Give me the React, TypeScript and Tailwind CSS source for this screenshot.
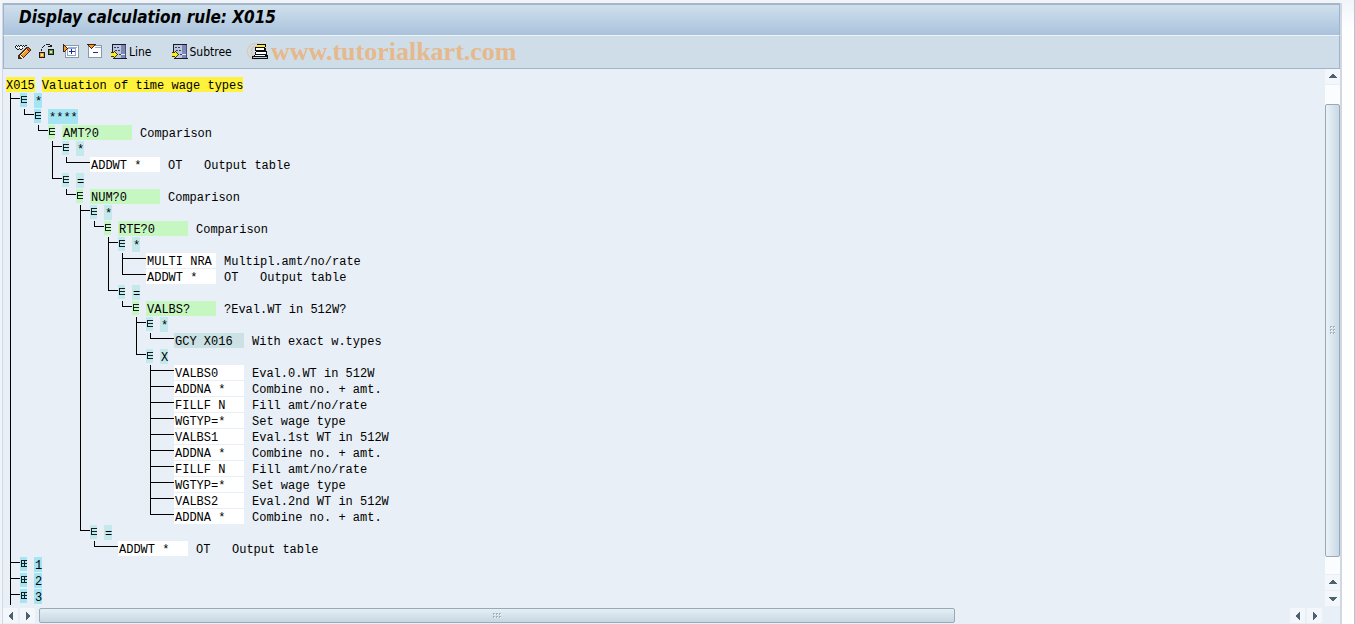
import { useState, type ReactNode } from "react";

type Tone = "cyan" | "teal" | "green" | "white" | "gray";

interface TreeNode {
  label: string;
  tone: Tone;
  text?: string;
  wide?: boolean;
  leaf?: boolean;
  children?: TreeNode[];
}

const TONES: Record<Tone, string> = {
  cyan: "bg-[#a5e4f2]",
  teal: "bg-[#c4e9ec]",
  green: "bg-[#c6f7c1]",
  white: "bg-white",
  gray: "bg-[#cbe1e3]",
};

const op = (label: string, text: string, tone: Tone = "white"): TreeNode => ({
  label,
  text,
  tone,
  wide: true,
  leaf: true,
});

const decision = (label: string, text: string, children: TreeNode[]): TreeNode => ({
  label,
  text,
  tone: "green",
  wide: true,
  children,
});

const branch = (label: string, children: TreeNode[]): TreeNode => ({ label, tone: "teal", children });

const TREE: TreeNode[] = [
  {
    label: "*",
    tone: "cyan",
    children: [
      {
        label: "****",
        tone: "cyan",
        children: [
          decision("AMT?0", "Comparison", [
            branch("*", [op("ADDWT *", "OT   Output table")]),
            branch("=", [
              decision("NUM?0", "Comparison", [
                branch("*", [
                  decision("RTE?0", "Comparison", [
                    branch("*", [
                      op("MULTI NRA", "Multipl.amt/no/rate"),
                      op("ADDWT *", "OT   Output table"),
                    ]),
                    branch("=", [
                      decision("VALBS?", "?Eval.WT in 512W?", [
                        branch("*", [op("GCY X016", "With exact w.types", "gray")]),
                        branch("X", [
                          op("VALBS0", "Eval.0.WT in 512W"),
                          op("ADDNA *", "Combine no. + amt."),
                          op("FILLF N", "Fill amt/no/rate"),
                          op("WGTYP=*", "Set wage type"),
                          op("VALBS1", "Eval.1st WT in 512W"),
                          op("ADDNA *", "Combine no. + amt."),
                          op("FILLF N", "Fill amt/no/rate"),
                          op("WGTYP=*", "Set wage type"),
                          op("VALBS2", "Eval.2nd WT in 512W"),
                          op("ADDNA *", "Combine no. + amt."),
                        ]),
                      ]),
                    ]),
                  ]),
                ]),
                branch("=", [op("ADDWT *", "OT   Output table")]),
              ]),
            ]),
          ]),
        ],
      },
    ],
  },
  { label: "1", tone: "cyan" },
  { label: "2", tone: "cyan" },
  { label: "3", tone: "cyan" },
];

interface Row {
  id: string;
  node: TreeNode;
  guides: boolean[];
  continues: boolean;
}

function flatten(nodes: TreeNode[], closed: string[], guides: boolean[] = [], prefix = "n"): Row[] {
  return nodes.flatMap((node, i) => {
    const id = `${prefix}-${i}`;
    const last = i === nodes.length - 1;
    const continues = !last || guides.length === 0;
    const row: Row = { id, node, guides, continues };
    const kids =
      node.children && !closed.includes(id)
        ? flatten(node.children, closed, [...guides, continues], id)
        : [];
    return [row, ...kids];
  });
}

function Icon({ children }: { children: ReactNode }) {
  return (
    <svg className="h-4 w-4 shrink-0" viewBox="0 0 16 16" shapeRendering="crispEdges" aria-hidden="true">
      {children}
    </svg>
  );
}

function GlassesPencilIcon() {
  return (
    <Icon>
      <path
        d="M0 2h1v2h-1zM1 1h1v1h-1zM1 4h1v1h-1zM2 2h1v1h-1zM3 1h1v1h-1zM2 5h2v1h-2zM4 2h1v1h-1zM5 1h2v1h-2zM5 5h2v1h-2zM4 4h1v1h-1zM7 2h1v1h-1zM8 1h1v1h-1zM7 4h1v1h-1zM9 2h1v1h-1zM10 1h2v1h-2z"
        fill="#1b1b1b"
      />
      <path d="M1 2h1v2h-1zM3 3h1v2h-1zM5 2h2v3h-2zM8 2h1v1h-1z" fill="#ffffff" />
      <path d="M12 3h2v1h1v1h1v2h-1v1h-1v1h-1v1h-1v1h-1v1h-1v1h-1v1h-2v1h-4v-4h1v-1h1v-1h1v-1h1v-1h1v-1h1v-1h1v-1h1v-1h1z" fill="#4a2a12" />
      <path d="M11 5h1v1h1v1h1v1h-1v1h-1v1h-1v1h-1v1h-1v1h-1v-1h-1v-1h-1v-1h1v-1h1v-1h1v-1h1v-1h1z" fill="#f59a28" />
      <path d="M11 5h1v1h-1v1h-1v1h-1v1h-1v1h-1v1h-1v-1h1v-1h1v-1h1v-1h1v-1h1z" fill="#ffe9a8" />
      <path d="M12 4h2v1h1v2h-1v-1h-1v-1h-1z" fill="#d9502a" />
      <path d="M5 11h1v1h1v1h1v1h-2v-1h-1z" fill="#fff2d5" />
    </Icon>
  );
}

function SwitchObjectIcon() {
  return (
    <Icon>
      <path d="M3 3h1v-1h1v1h-1v1h-1zM5 1h1v1h-1zM7 0h4v1h-4zM11 1h1v2h-1zM9 2h2v1h-2zM12 1h1v2h-1zM2 5h1v2h-1z" fill="#1b1b1b" />
      <path d="M0 8h6v6h-6zM9 5h6v6h-6z" fill="#1b1b1b" />
      <path d="M1 9h4v4h-4z" fill="#f59a1e" />
      <path d="M2 10h2v2h-2z" fill="#ffe9a8" />
      <path d="M10 6h4v4h-4z" fill="#5f9a3a" />
      <path d="M11 7h2v2h-2z" fill="#d3efb4" />
    </Icon>
  );
}

function ExpandIcon() {
  return (
    <Icon>
      <path d="M2 1h14v13h-14z" fill="#8d98a8" />
      <path d="M3 2h12v11h-12z" fill="#ffffff" />
      <path d="M5 3h9v1h-9z" fill="#8faed6" />
      <path d="M4 4h9v8h-9z" fill="#8ea6cf" />
      <path d="M5 5h7v6h-7z" fill="#ffffff" />
      <path d="M6 7h6v1h-6zM8 5h1v5h-1z" fill="#1d2c9c" />
      <path d="M0 0h1v1h1v1h1v1h1v1h1v1h-1v1h-1v1h-1v1h-2z" fill="#3a2108" />
      <path d="M1 1v1h1v1h1v1h1v1h-1v1h-1v1h-1z" fill="#ff9a1a" />
    </Icon>
  );
}

function CollapseIcon() {
  return (
    <Icon>
      <path d="M1 1h14v13h-14z" fill="#8d98a8" />
      <path d="M2 2h12v11h-12z" fill="#ffffff" />
      <path d="M8 3h6v1h-6z" fill="#8faed6" />
      <path d="M6 8h5v1h-5z" fill="#1d2c9c" />
      <path d="M0 0h9v1h-1v1h-1v1h-1v1h-1v1h-1v-1h-1v-1h-1v-1h-1v-1h-1z" fill="#3a2108" />
      <path d="M1 1h6v1h-1v1h-1v1h-1v-1h-1v-1h-1z" fill="#ff9a1a" />
    </Icon>
  );
}

function SelectBlockIcon() {
  return (
    <Icon>
      <path d="M1 0h14v1h-14zM1 1h1v7h-1zM2 14h14v1h-14z" fill="#16182c" />
      <path d="M2 1h8v13h-8z" fill="#b9c8dc" />
      <path d="M10 1h5v13h-5z" fill="#8087b4" />
      <path d="M14 1h1v13h-1z" fill="#4b5078" />
      <path d="M3 3h2v1h-2zM6 3h2v1h-2zM4 6h2v1h-2zM7 6h2v1h-2zM8 10h2v1h-2z" fill="#39415f" />
      <path d="M10 10h4v1h-4z" fill="#e6eaf6" />
      <path d="M0 8h3v-1h1v1h1v1h1v1h1v1h-1v1h-1v1h-1v1h-1v-1h-3z" fill="#3f3500" />
      <path d="M0 9h3v-1h1v1h1v1h1v1h-1v1h-1v1h-1v-1h-3z" fill="#ffec1c" />
    </Icon>
  );
}

function StackIcon() {
  return (
    <Icon>
      <path d="M5 0h9v3h-1v1h1v3h1v4h1v4h-16v-3h2v-1h1v-3h1v-1h-1v-4h2z" fill="#0d0d0d" />
      <path d="M5 1h8v2h-8z" fill="#ffec1c" />
      <path d="M4 4h8v2h-8zM4 8h10v2h-10zM3 11h10v1h-10z" fill="#ffffff" />
      <path d="M1 13h14v1h-14z" fill="#a9d0e6" />
    </Icon>
  );
}

function ToolButton({ label, text, children }: { label: string; text?: string; children: ReactNode }) {
  return (
    <button type="button" aria-label={label} className="flex h-5 items-center gap-[2px]">
      {children}
      {text && <span>{text}</span>}
    </button>
  );
}

const ARROWS = {
  up: "M3 1h2v1h1v1h1v1h1v1h-8v-1h1v-1h1v-1h1z",
  down: "M0 2h8v1h-1v1h-1v1h-1v1h-2v-1h-1v-1h-1v-1h-1z",
  left: "M5 0h1v8h-1v-1h-1v-1h-1v-1h-1v-2h1v-1h1v-1h1z",
  right: "M2 0h1v1h1v1h1v1h1v2h-1v1h-1v1h-1v1h-1z",
};

function ScrollButton({ dir }: { dir: keyof typeof ARROWS }) {
  return (
    <button
      type="button"
      aria-label={`Scroll ${dir}`}
      className="flex h-[15px] w-[15px] shrink-0 items-center justify-center bg-[#f3f6fa]"
    >
      <svg className="h-2 w-2" viewBox="0 0 8 8" shapeRendering="crispEdges" aria-hidden="true">
        <path d={ARROWS[dir]} fill="#4d626f" />
      </svg>
    </button>
  );
}

function Grip({ cols, rows }: { cols: number; rows: number }) {
  const dots = Array.from({ length: cols * rows }, (_, i) => ({ x: (i % cols) * 3, y: Math.floor(i / cols) * 3 }));
  return (
    <svg width={cols * 3} height={rows * 3} shapeRendering="crispEdges" aria-hidden="true">
      {dots.map(({ x, y }) => (
        <g key={`${x}-${y}`}>
          <rect x={x} y={y} width="2" height="2" fill="#9fb0be" />
          <rect x={x + 1} y={y + 1} width="1" height="1" fill="#ffffff" />
        </g>
      ))}
    </svg>
  );
}

/** One indentation step: the vertical guide line, and the elbow for the row's own step. */
function Guide({ line, elbow, long }: { line: boolean; elbow?: boolean; long?: boolean }) {
  return (
    <span className={`flex h-4 shrink-0 pl-1 ${long ? "w-7" : "w-[14px]"}`}>
      <span className={`w-px ${line ? "h-4 bg-black" : elbow ? "h-[6px] bg-black" : ""}`} />
      {elbow && <span className="mt-[5px] h-px flex-1 bg-black" />}
    </span>
  );
}

function TreeRow({ row, closed, onToggle }: { row: Row; closed: boolean; onToggle: () => void }) {
  const { node, guides, continues } = row;
  const open = !!node.children && !closed;
  return (
    <li className="flex h-4 items-start" role="treeitem">
      {guides.map((line, i) => (
        <Guide key={i} line={line} />
      ))}
      <Guide line={continues} elbow long={node.leaf} />
      {!node.leaf && (
        <button
          type="button"
          onClick={onToggle}
          aria-label={`${open ? "Collapse" : "Expand"} ${node.label}`}
          className={`mr-[7px] flex h-[14px] w-[7px] shrink-0 items-start justify-end pt-[3px] ${TONES[node.tone]}`}
        >
          <svg className="h-[7px] w-[6px]" viewBox="0 0 6 7" shapeRendering="crispEdges" aria-hidden="true">
            <path d="M0 0h6v1h-5v2h5v1h-5v2h5v1h-6z" fill="#102020" />
            {!open && <path d="M3 0h1v7h-1z" fill="#102020" />}
          </svg>
        </button>
      )}
      <span className={`h-[15px] whitespace-pre pl-px ${node.wide ? "w-[70px]" : ""} ${TONES[node.tone]}`}>
        {node.label}
      </span>
      {node.text && <span className="ml-2 whitespace-pre">{node.text}</span>}
    </li>
  );
}

export default function App() {
  const [closed, setClosed] = useState<string[]>([]);
  const rows = flatten(TREE, closed);
  const toggle = (id: string) =>
    setClosed((prev) => (prev.includes(id) ? prev.filter((x) => x !== id) : [...prev, id]));

  return (
    <div className="flex h-screen bg-[#f1f4f9] pt-[3px] pl-[2px] font-['DejaVu_Sans_Condensed','DejaVu_Sans',sans-serif] text-black">
      <main className="flex min-w-0 flex-1 flex-col border-r-2 border-l border-[#cfd8e4] bg-[#e8eff6]">
        <h1 className="flex h-[33px] items-center border border-t-2 border-b-[#eef4f9] border-x-[#9fb3ca] border-t-[#a6b6c9] bg-linear-to-b from-[#cfe0ec] to-[#a9c2dc] pb-1 pl-[15px] text-[17px] font-bold italic">
          Display calculation rule: X015
        </h1>
        <div
          role="toolbar"
          aria-label="Calculation rule"
          className="relative flex h-[33px] items-center border border-t-0 border-[#9fb3ca] bg-[#cfdde8] pl-[11px] text-[12px]"
        >
          <span className="pointer-events-none absolute top-0 left-[242px] flex h-[30px] items-center whitespace-pre font-['Liberation_Serif',serif] text-[26px] font-bold text-[#e5b98c]">
            <span className="w-[25px] font-normal opacity-60">©</span>www.tutorialkart.com
          </span>
          <div className="relative flex items-center gap-2">
            <ToolButton label="Display or change"><GlassesPencilIcon /></ToolButton>
            <ToolButton label="Other object"><SwitchObjectIcon /></ToolButton>
            <ToolButton label="Expand"><ExpandIcon /></ToolButton>
            <ToolButton label="Collapse"><CollapseIcon /></ToolButton>
            <ToolButton label="Line" text="Line"><SelectBlockIcon /></ToolButton>
          </div>
          <div className="relative ml-5 flex items-center gap-5">
            <ToolButton label="Subtree" text="Subtree"><SelectBlockIcon /></ToolButton>
            <ToolButton label="Where used"><StackIcon /></ToolButton>
          </div>
        </div>

        <div className="flex min-h-0 flex-1">
          <div className="min-w-0 flex-1 overflow-hidden pt-2 pl-[3px] font-['Liberation_Mono',monospace] text-[12px] leading-[18px]">
            <p className="flex h-4 gap-[7px] whitespace-pre">
              <span className="h-[15px] bg-[#fff23c]">X015</span>
              <span className="h-[15px] bg-[#fff23c]">Valuation of time wage types</span>
            </p>
            <ul role="tree" aria-label="Valuation of time wage types">
              {rows.map((row) => (
                <TreeRow
                  key={row.id}
                  row={row}
                  closed={closed.includes(row.id)}
                  onToggle={() => toggle(row.id)}
                />
              ))}
            </ul>
          </div>
          <div className="flex w-[15px] flex-col gap-px pb-px">
            <ScrollButton dir="up" />
            <div className="flex min-h-0 flex-1 flex-col bg-[#fbfcfd] pt-[19px] pb-[17px]">
              <div className="flex flex-1 items-center justify-center rounded-[2px] border border-[#9aa9b7] bg-linear-to-r from-[#eaf2f8] to-[#c9d9e5]">
                <Grip cols={2} rows={3} />
              </div>
            </div>
            <ScrollButton dir="up" />
            <ScrollButton dir="down" />
          </div>
        </div>

        <div className="flex h-[17px] items-center gap-[2px] pr-[18px]">
          <ScrollButton dir="left" />
          <ScrollButton dir="right" />
          <div className="mr-px ml-[2px] flex h-[15px] min-w-0 flex-1">
            <div className="flex w-[73.4%] items-center justify-center rounded-[2px] border border-[#9aa9b7] bg-linear-to-b from-[#e6eff5] to-[#c6d7e3]">
              <Grip cols={3} rows={2} />
            </div>
          </div>
          <ScrollButton dir="left" />
          <ScrollButton dir="right" />
        </div>
      </main>
      <div className="-mt-[3px] w-[13px] border-r border-[#b9c4d2] bg-linear-to-b from-[#f1f4f9] to-white to-5%" />
    </div>
  );
}
